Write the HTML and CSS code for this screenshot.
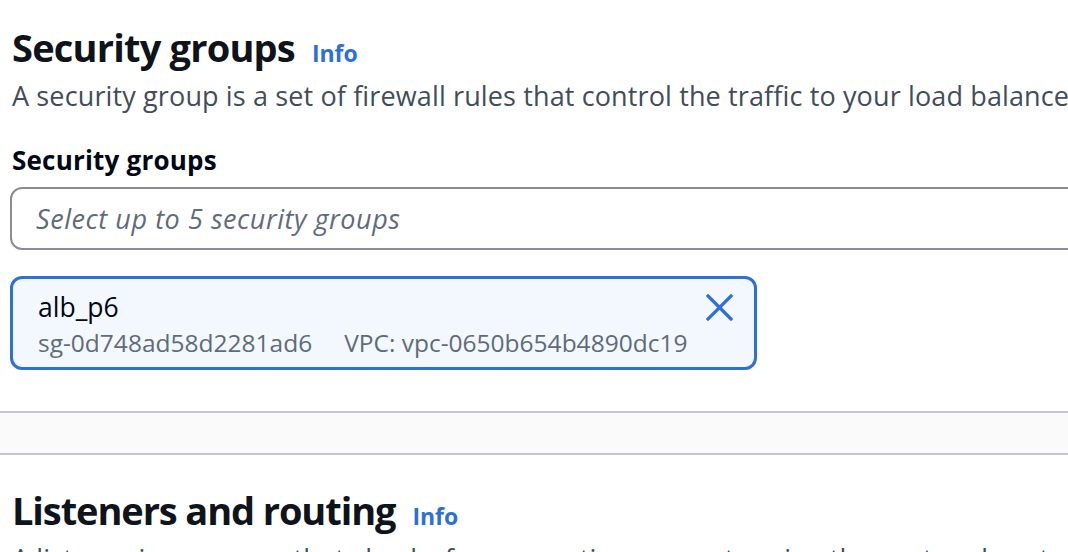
FILE: index.html
```html
<!DOCTYPE html>
<html>
<head>
<meta charset="utf-8">
<link rel="stylesheet" href="styles.css">
</head>
<body>
<section class="panel">
  <div class="header">
    <h2 class="title">Security groups</h2>
    <a class="info">Info</a>
  </div>
  <p class="desc">A security group is a set of firewall rules that control the traffic to your load balancer.</p>
  <div class="field">
    <label class="label">Security groups</label>
    <div class="select"><span class="placeholder">Select up to 5 security groups</span></div>
    <div class="token">
      <div class="token-text">
        <div class="token-name">alb_p6</div>
        <div class="token-meta"><span>sg-0d748ad58d2281ad6</span><span>VPC: vpc-0650b654b4890dc19</span></div>
      </div>
      <svg class="dismiss" viewBox="0 0 27 27" width="27" height="27"><path d="M2 2 L25 25 M25 2 L2 25" stroke="#2f6fd8" stroke-width="3.2" stroke-linecap="square" fill="none"/></svg>
    </div>
  </div>
</section>
<div class="band"></div>
<section class="panel next">
  <div class="header">
    <h2 class="title">Listeners and routing</h2>
    <a class="info">Info</a>
  </div>
  <p class="desc">A listener is a process that checks for connection requests using the port and protocol you configure.</p>
</section>
</body>
</html>
```
FILE: styles.css
```css
html, body {
  margin: 0;
  padding: 0;
  background: #ffffff;
  overflow: hidden;
}
body {
  font-family: "Open Sans", "Noto Sans", sans-serif;
  color: #000716;
  width: 1068px;
  height: 552px;
}
.panel {
  padding: 0 0 41px 10px;
  width: 1300px;
}
.header {
  display: flex;
  align-items: baseline;
  gap: 17px;
  padding-top: 24px;
  padding-left: 2px;
}
.title {
  margin: 0;
  font-size: 38px;
  line-height: 46px;
  font-weight: 700;
  color: #0f141a;
  letter-spacing: -0.8px;
}
.next .title {
  letter-spacing: -1.1px;
}
.info {
  font-size: 23px;
  font-weight: 700;
  color: #2d6fd8;
}
.desc {
  margin: 8px 0 0 2px;
  font-size: 27px;
  line-height: 36px;
  color: #414d5c;
  white-space: nowrap;
  letter-spacing: 0.13px;
}
.field {
  margin-top: 29px;
}
.label {
  display: block;
  padding-left: 2px;
  font-size: 26px;
  font-weight: 700;
  line-height: 34px;
  color: #000716;
  letter-spacing: 0.2px;
}
.select {
  margin-top: 10px;
  height: 63px;
  box-sizing: border-box;
  border: 2px solid #8c8c94;
  border-radius: 12px;
  display: flex;
  align-items: center;
  padding-left: 24px;
}
.placeholder {
  font-size: 27px;
  font-style: italic;
  color: #5f6b7a;
  letter-spacing: 0.55px;
}
.token {
  margin-top: 26px;
  width: 747px;
  height: 94px;
  box-sizing: border-box;
  border: 3px solid #2f6fd8;
  border-radius: 12px;
  background: #f2f8fd;
  display: flex;
  justify-content: space-between;
  align-items: flex-start;
  padding: 11px 21px 0 25px;
}
.token-name {
  font-size: 26.5px;
  line-height: 34px;
  color: #000716;
}
.token-meta {
  display: flex;
  gap: 32px;
  margin-top: 2px;
  font-size: 24.5px;
  line-height: 34px;
  color: #5f6b7a;
}
.dismiss {
  margin-top: 4px;
}
.band {
  height: 40px;
  background: #fafafa;
  border-top: 2px solid #c6c6cd;
  border-bottom: 2px solid #c6c6cd;
}
.next .header {
  padding-top: 32px;
}
```
